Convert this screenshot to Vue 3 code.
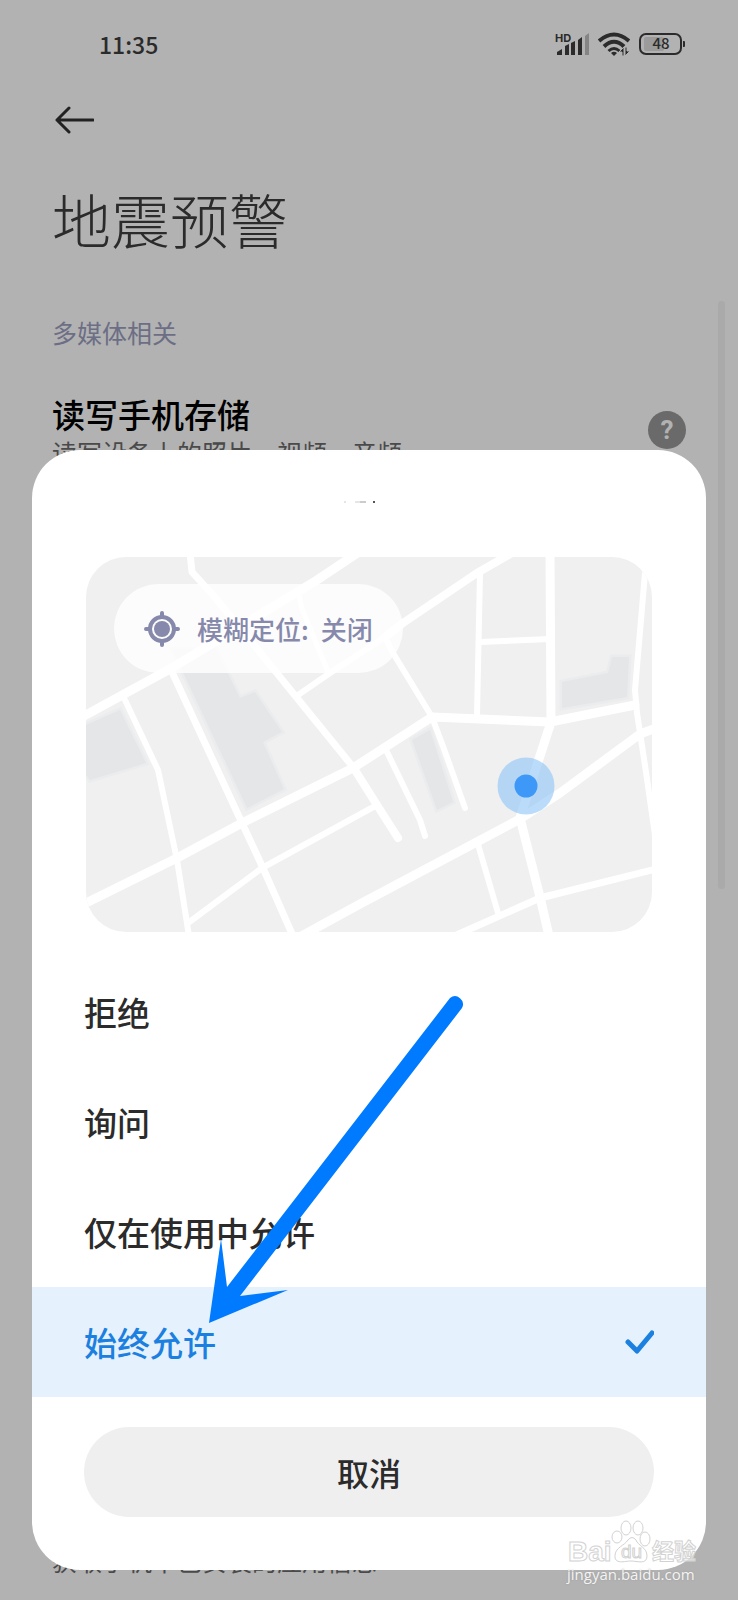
<script setup>
import { ref } from "vue";

const options = [
  { value: "deny", label: "拒绝" },
  { value: "ask", label: "询问" },
  { value: "in-use", label: "仅在使用中允许" },
  { value: "always", label: "始终允许" },
];

const selected = ref("always");

const buildings = [
  "0,168 34,153 60,206 4,223 0,218",
  "86,92 130,92 154,141 169,135 196,175 177,185 198,232 161,251",
  "326,183 344,173 367,245 351,253",
  "476,125 522,116 526,100 543,100 541,140 476,151",
];

const roads = [
  { w: 9, points: "-4,160 84,112 231,23 270,-3" },
  { w: 7, points: "104,-4 106,15 127,38 164,83 267,210" },
  { w: 8, points: "267,210 291,248 312,281" },
  { w: 9, points: "-4,348 91,301 156,266 267,211 346,160 464,165 549,148" },
  { w: 6, points: "39,143 72,213 91,303 103,379" },
  { w: 7, points: "86,115 156,266 177,311 207,379" },
  { w: 6, points: "102,366 176,311 291,248" },
  { w: 6, points: "212,138 244,116 299,80" },
  { w: 8, points: "299,80 317,66 391,16 426,-4" },
  { w: 5, points: "212,34 216,52 242,115" },
  { w: 6, points: "299,80 307,96 346,160 358,192 379,251" },
  { w: 6, points: "301,195 334,263 339,279" },
  { w: 6, points: "394,16 391,158" },
  { w: 9, points: "464,-4 465,165" },
  { w: 6, points: "394,85 464,82" },
  { w: 9, points: "465,165 452,205 434,261 454,340 463,379" },
  { w: 9, points: "210,382 274,347 434,262 474,236 554,177 570,171" },
  { w: 6, points: "391,284 412,356" },
  { w: 7, points: "366,380 454,341 570,312" },
  { w: 6, points: "560,-4 559,16 549,133 551,156 560,215 570,285" },
];
</script>

<template>
  <div class="screen">
    <main class="page">
      <div class="status-bar">
        <span class="clock">11:35</span>
        <div class="status-icons">
          <svg width="34" height="24" viewBox="0 0 34 24" aria-label="HD">
            <text x="0" y="10" class="hd">HD</text>
            <g fill="#2b2b2b">
              <path d="M2 23v-3l5-3v6z" />
              <path d="M10 23v-9l4-2v11z" />
              <path d="M16 23V11l4-2v14z" />
              <path d="M23 23V8l4-3v18z" />
              <path d="M30 23V4l4-3v22z" fill="#858585" />
            </g>
          </svg>
          <svg width="32" height="24" viewBox="0 0 32 24" aria-hidden="true">
            <g fill="none" stroke="#2b2b2b" stroke-width="4">
              <path d="M1 9Q16 -4 31 9" />
              <path d="M6 14.500Q16 5 26 14.500" />
              <path d="M10.500 19Q16 14 21.500 19" stroke-width="3" />
            </g>
            <path d="M13 21Q16 18.500 19 21L16 24z" fill="#2b2b2b" />
            <g fill="#2b2b2b" stroke="#b2b2b2" stroke-width="1">
              <path d="M21 20l5-5v9h-2v-4z" />
              <path d="M32 19l-5 5v-9h2v4z" />
            </g>
          </svg>
          <svg width="47" height="22" viewBox="0 0 47 22" aria-label="48%">
            <rect x="5" y="4" width="20" height="14" rx="2" fill="#9b9b9b" />
            <rect x="1" y="1" width="41" height="20" rx="6" fill="none" stroke="#2b2b2b" stroke-width="2" />
            <path d="M44 8h1q1 0 1 1v4q0 1-1 1h-1z" fill="#2b2b2b" />
            <text x="22" y="16" text-anchor="middle" class="battery">48</text>
          </svg>
        </div>
      </div>

      <button class="back" aria-label="返回">
        <svg width="40" height="28" viewBox="0 0 40 28">
          <path d="M15 2L3 14l12 12M3 14h36" fill="none" stroke="#222" stroke-width="3" stroke-linecap="round" stroke-linejoin="round" />
        </svg>
      </button>

      <h1>地震预警</h1>
      <h2>多媒体相关</h2>

      <div class="permission">
        <div>
          <h3>读写手机存储</h3>
          <p>读写设备上的照片、视频、音频</p>
        </div>
        <button class="help" aria-label="帮助">?</button>
      </div>

      <p class="last-row">获取手机中已安装的应用信息</p>
    </main>

    <div class="scrollbar"></div>

    <section class="sheet" role="dialog">
      <!-- lower edge of the scrolled-away heading -->
      <div class="heading-edge">
        <svg width="34" height="3" viewBox="0 0 34 3">
          <path d="M0 1h2M11 1h5" stroke="#ccc" stroke-width="1" />
          <path d="M16 1h6" stroke="#999" stroke-width="1" />
          <path d="M29 1h2" stroke="#555" stroke-width="2" />
        </svg>
      </div>

      <div class="map">
        <svg class="map-art" viewBox="0 0 566 375" aria-hidden="true">
          <rect width="566" height="375" fill="#f0f0f0" />
          <polygon v-for="b in buildings" :key="b" :points="b" fill="#e4e6e8" stroke="#eaecee" stroke-width="5" paint-order="stroke" />
          <polyline
            v-for="r in roads"
            :key="r.points"
            :points="r.points"
            :stroke-width="r.w"
            fill="none"
            stroke="#fff"
            stroke-linejoin="round"
            stroke-linecap="round"
          />
          <circle cx="440" cy="229" r="28.500" fill="#8cc4f7" fill-opacity="0.6" />
          <circle cx="440" cy="229" r="11.500" fill="#3d98f7" />
        </svg>
        <button class="fuzzy">
          <svg width="36" height="36" viewBox="0 0 36 36">
            <g fill="none" stroke="#8689ab">
              <circle cx="18" cy="18" r="12" stroke-width="4" />
              <path d="M18 2v4M18 30v4M2 18h4M30 18h4" stroke-width="4" stroke-linecap="round" />
            </g>
            <circle cx="18" cy="18" r="8" fill="#8689ab" />
          </svg>
          <span class="fuzzy-label">模糊定位:</span>
          <span>关闭</span>
        </button>
      </div>

      <div class="options" role="radiogroup">
        <label v-for="o in options" :key="o.value" class="option" :class="{ active: selected === o.value }">
          <span>{{ o.label }}</span>
          <input v-model="selected" type="radio" name="permission" :value="o.value" />
        </label>
        <svg class="pointer" width="256" height="330" viewBox="209 995 256 330" aria-hidden="true">
          <path d="M209 1323L221 1239L227 1287L450 998A8 8 0 0 1 462 1008L240 1296L288 1290z" fill="#007aff" />
        </svg>
      </div>

      <button class="cancel">取消</button>
    </section>

    <div class="watermark">
      <svg width="130" height="45" viewBox="0 0 130 45" aria-hidden="true">
        <g fill="#fff" fill-opacity="0.6" stroke="#d2d2d2" stroke-width="1">
          <text x="1" y="41" class="wm-bai">Bai</text>
          <ellipse cx="50" cy="17" rx="5" ry="6" />
          <ellipse cx="59" cy="8" rx="5" ry="7" />
          <ellipse cx="71" cy="8" rx="5" ry="7" />
          <ellipse cx="78" cy="19" rx="5" ry="7" />
          <path d="M48 35C49 27 57 26 61 20Q65 15 69 20C71 26 80 27 80 36C80 45 70 41 64 41C58 41 47 45 48 35z" />
          <text x="54" y="38" class="wm-du">du</text>
          <text x="85" y="39" class="wm-cn">经验</text>
        </g>
      </svg>
      <span class="wm-url">jingyan.baidu.com</span>
    </div>
  </div>
</template>

<style>
body {
  margin: 0;
  background: #b2b2b2;
}
</style>

<style scoped>
.screen {
  position: relative;
  min-height: 100vh;
  background: #b2b2b2;
  color: #2b2b2b;
  font-family: "Noto Sans CJK SC", sans-serif;
}

.page {
  display: flex;
  flex-direction: column;
  box-sizing: border-box;
  min-height: 100vh;
  padding: 28px 52px 24px;
}

h1,
h2,
h3,
p {
  margin: 0;
}

button {
  border: none;
  font-family: inherit;
  cursor: pointer;
}

.status-bar {
  display: flex;
  align-items: center;
  justify-content: space-between;
  height: 32px;
  padding-left: 47px;
}

.clock {
  font-size: 23px;
  font-weight: 500;
  line-height: 32px;
}

.status-icons {
  display: flex;
  align-items: center;
  gap: 9px;
}

.hd {
  font: 700 11px Inter, sans-serif;
  fill: #2b2b2b;
}

.battery {
  font: 500 15px "Noto Sans CJK SC", sans-serif;
  fill: #2b2b2b;
}

.back {
  display: flex;
  align-self: flex-start;
  margin-top: 46px;
  padding: 0 2px;
  background: none;
}

h1 {
  margin-top: 45px;
  font-size: 59px;
  font-weight: 200;
  line-height: 80px;
}

h2 {
  margin-top: 57px;
  color: #6c6e85;
  font-size: 25px;
  font-weight: 400;
  line-height: 32px;
}

.permission {
  display: flex;
  align-items: center;
  justify-content: space-between;
  margin-top: 44px;
}

h3 {
  color: #000;
  font-size: 33px;
  font-weight: 500;
  line-height: 44px;
}

p {
  color: #4a4a4a;
  font-size: 25px;
  line-height: 32px;
}

.help {
  width: 38px;
  height: 38px;
  padding: 0;
  border-radius: 50%;
  background: #6a6a6a;
  color: #b2b2b2;
  font: 700 26px Roboto, sans-serif;
}

.last-row {
  margin-top: auto;
}

.scrollbar {
  position: absolute;
  top: 301px;
  right: 13px;
  width: 7px;
  height: 588px;
  border-radius: 4px;
  background: #aaa;
}

.sheet {
  position: absolute;
  right: 32px;
  bottom: 30px;
  left: 32px;
  padding-bottom: 53px;
  border-radius: 48px;
  background: #fff;
}

.heading-edge {
  display: flex;
  justify-content: center;
  padding: 51px 16px 53px 0;
}

.map {
  position: relative;
  margin: 0 54px 25px;
}

.map-art {
  display: block;
  width: 100%;
  border-radius: 40px;
}

.fuzzy {
  position: absolute;
  top: 27px;
  left: 28px;
  display: flex;
  align-items: center;
  height: 89px;
  padding: 0 30px;
  border-radius: 45px;
  background: rgba(255, 255, 255, 0.8);
  color: #8689ab;
  font-size: 26px;
  font-weight: 500;
}

.fuzzy-label {
  margin: 0 12px 0 17px;
}

.options {
  position: relative;
}

.option {
  display: flex;
  align-items: center;
  justify-content: space-between;
  height: 110px;
  padding: 0 52px;
  font-size: 33px;
  font-weight: 500;
  cursor: pointer;
}

.option.active {
  background: #e5f1fd;
  color: #1b80df;
}

.option input {
  appearance: none;
  width: 30px;
  height: 26px;
  margin: 0;
}

.option input:checked {
  background: url("data:image/svg+xml,%3Csvg xmlns='http://www.w3.org/2000/svg' viewBox='0 0 30 26'%3E%3Cpath d='M4 13L13 22L28 4' fill='none' stroke='%231b80df' stroke-width='5' stroke-linecap='round' stroke-linejoin='round'/%3E%3C/svg%3E");
}

.pointer {
  position: absolute;
  top: 38px;
  left: 177px;
  pointer-events: none;
}

.cancel {
  display: block;
  width: calc(100% - 104px);
  height: 90px;
  margin: 30px 52px 0;
  border-radius: 45px;
  background: #efefef;
  color: #2b2b2b;
  font-size: 32px;
  font-weight: 500;
}

.watermark {
  position: absolute;
  right: 41px;
  bottom: 17px;
  display: flex;
  flex-direction: column;
}

.watermark svg {
  overflow: visible;
}

.wm-bai {
  font: 700 28px "Liberation Sans", sans-serif;
}

.wm-du {
  font: 400 19px "Liberation Sans", sans-serif;
}

.wm-cn {
  font: 700 22px "Noto Sans CJK SC", sans-serif;
}

.wm-url {
  color: #f4f4f4;
  font: 400 15px/18px "Open Sans", sans-serif;
  text-shadow: 0 0 2px #999;
}
</style>
